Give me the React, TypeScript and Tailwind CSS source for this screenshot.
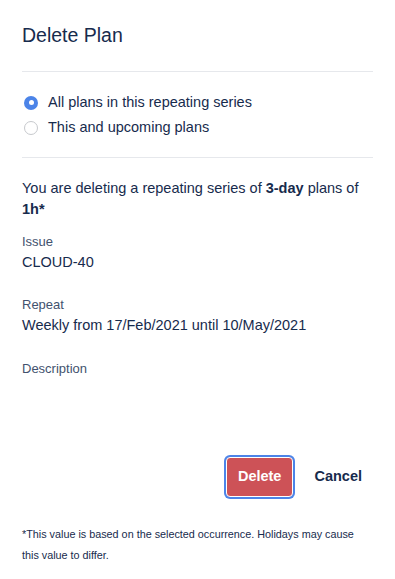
export default function App() {
  return (
    <div
      className="w-[395px] h-[579px] bg-white text-[#172b4d] px-[22px]"
      style={{ fontFamily: "'Liberation Sans', Arial, sans-serif" }}
    >
      {/* Header */}
      <div className="pt-[23px] pb-[24px] border-b border-[#e6e8ec]">
        <h1 className="text-[19.5px] leading-[24px] font-normal">Delete Plan</h1>
      </div>

      {/* Options */}
      <div className="pt-[21px] pb-[20px] border-b border-[#e6e8ec] flex flex-col gap-[6px]">
        <label className="flex items-center gap-[10px] text-[14.5px] leading-[19px]">
          <span className="w-[14px] h-[14px] ml-[2px] rounded-full bg-[#4c84e8] flex items-center justify-center">
            <span className="w-[5px] h-[5px] rounded-full bg-white" />
          </span>
          All plans in this repeating series
        </label>
        <label className="flex items-center gap-[10px] text-[14.5px] leading-[19px]">
          <span className="w-[14px] h-[14px] ml-[2px] rounded-full border border-[#c7c9cd] bg-white" />
          This and upcoming plans
        </label>
      </div>

      {/* Details */}
      <div className="pt-[20px]">
        <p className="text-[14.5px] leading-[21px]">
          You are deleting a repeating series of <b>3-day</b> plans of <b>1h*</b>
        </p>

        <div className="mt-[14px]">
          <div className="text-[13px] leading-[16px] text-[#42526e]">Issue</div>
          <div className="text-[14.5px] leading-[21px] mt-[2px]">CLOUD-40</div>
        </div>

        <div className="mt-[24px]">
          <div className="text-[13px] leading-[16px] text-[#42526e]">Repeat</div>
          <div className="text-[14.5px] leading-[21px] mt-[2px]">
            Weekly from 17/Feb/2021 until 10/May/2021
          </div>
        </div>

        <div className="mt-[25px]">
          <div className="text-[13px] leading-[16px] text-[#42526e]">Description</div>
        </div>
      </div>

      {/* Actions */}
      <div className="flex justify-end items-center gap-[17px] mt-[80px] pr-[7px]">
        <button className="h-[40px] px-[11px] rounded-[4px] bg-[#cd5257] text-white text-[14.5px] font-bold ring-2 ring-[#4c84e8] border border-white">
          Delete
        </button>
        <button className="h-[40px] px-[4px] text-[14.5px] font-bold text-[#172b4d]">Cancel</button>
      </div>

      {/* Footnote */}
      <p className="mt-[27px] max-w-[336px] text-[10.8px] leading-[21px] text-[#172b4d]">
        *This value is based on the selected occurrence. Holidays may cause this value to differ.
      </p>
    </div>
  );
}
